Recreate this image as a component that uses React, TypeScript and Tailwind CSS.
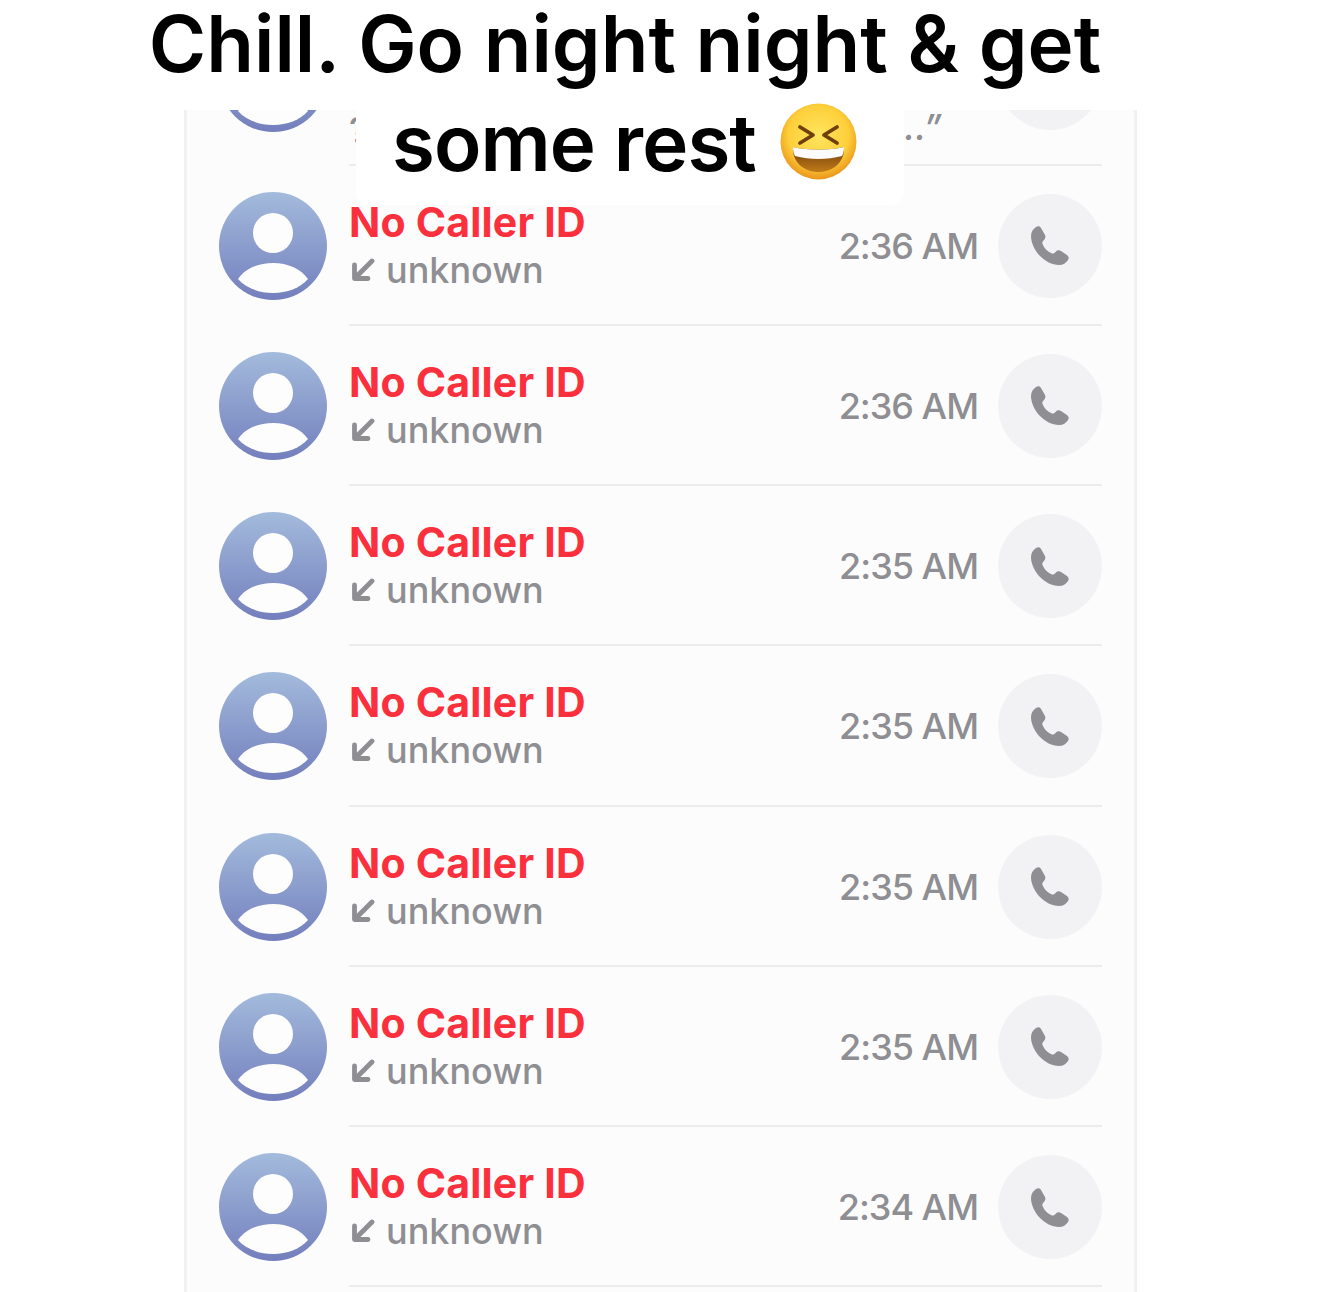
const times = ["2:36 AM", "2:36 AM", "2:35 AM", "2:35 AM", "2:35 AM", "2:35 AM", "2:34 AM"];

function Avatar({ id }: { id: string }) {
  return (
    <svg width="108" height="108" viewBox="0 0 108 108" className="shrink-0">
      <defs>
        <linearGradient id={id} x1="0" y1="0" x2="0" y2="1">
          <stop offset="0" stopColor="#a3bbdc" />
          <stop offset="1" stopColor="#737fbd" />
        </linearGradient>
      </defs>
      <circle cx="54" cy="54" r="54" fill={`url(#${id})`} />
      <circle cx="54" cy="41" r="20" fill="#fdfdfd" />
      <path d="M19 87 C26 77 39 71 54 71 C69 71 82 77 89 87 C81 96 68 101 54 101 C40 101 27 96 19 87 Z" fill="#fdfdfd" />
    </svg>
  );
}

function Phone() {
  return (
    <svg width="39" height="39" viewBox="0 0 39 39" className="mr-[1px]">
      <path
        d="M1 10 C1 6 3 3 6 1 C8 0 10 0 11 2 L15 9 C16 11 15 13 13.5 14.5 C12 16 12 17 13 19 C15 23 17 25 21 27 C23 28 24 27.5 25.5 26 C27 24 29 23.5 31 25 L37 29 C39 30.5 39 32.5 38 34 C36 37 33 39 29 39 C22 39 15 35 10 30 C5 25 1 17 1 10 Z"
        fill="#8e8e93"
      />
    </svg>
  );
}

function Arrow() {
  return (
    <svg width="24" height="24" viewBox="0 0 24 24" className="shrink-0">
      <path d="M21 3 L5 19 M3.5 7 V20.5 H17" fill="none" stroke="#8e8e93" strokeWidth="4.8" strokeLinecap="round" strokeLinejoin="round" />
    </svg>
  );
}

function Emoji() {
  return (
    <svg width="77" height="77" viewBox="0 0 77 77" className="mb-[2px] shrink-0">
      <defs>
        <radialGradient id="emojiFace" cx="0.5" cy="0.42" r="0.58">
          <stop offset="0" stopColor="#ffe55e" />
          <stop offset="0.68" stopColor="#fdcf3a" />
          <stop offset="1" stopColor="#ea951c" />
        </radialGradient>
        <linearGradient id="emojiMouth" x1="0" y1="0" x2="0" y2="1">
          <stop offset="0" stopColor="#6f3d0c" />
          <stop offset="1" stopColor="#c07a18" />
        </linearGradient>
      </defs>
      <circle cx="38.5" cy="38.5" r="38" fill="url(#emojiFace)" />
      <path d="M20 24 L33 32 L20 40" fill="none" stroke="#6f400e" strokeWidth="3.8" strokeLinecap="round" strokeLinejoin="round" />
      <path d="M57 24 L44 32 L57 40" fill="none" stroke="#6f400e" strokeWidth="3.8" strokeLinecap="round" strokeLinejoin="round" />
      <path d="M13 44 C28 47.5 49 47.5 64 44 C65 59 53 69 38.5 69 C24 69 12 59 13 44 Z" fill="url(#emojiMouth)" />
      <path d="M13 44 C28 47.5 49 47.5 64 44 C64 48 63.5 50 62 53 C47 57 30 57 15 53 C13.5 50 13 48 13 44 Z" fill="#fbfbfb" />
    </svg>
  );
}

function Row({ time, index }: { time: string; index: number }) {
  return (
    <div className="flex h-[160.25px] pl-[32px] pr-[32px]">
      <div className="pt-[26px]">
        <Avatar id={`avatar-${index}`} />
      </div>
      <div className="ml-[22px] flex flex-1 items-center border-b-2 border-[#ececee] pt-[2px]">
        <div className="flex-1">
          <div className="text-[41px] font-bold leading-[48px] tracking-[0.2px] text-[#fa303c]">No Caller ID</div>
          <div className="flex items-center gap-[11px] pl-[2px] text-[36px] font-medium leading-[48px] text-[#8e8e93]">
            <Arrow />
            <span>unknown</span>
          </div>
        </div>
        <div className="text-[36px] font-medium leading-[48px] tracking-[-1px] text-[#8e8e93]">{time}</div>
        <div className="ml-[20px] flex h-[104px] w-[104px] items-center justify-center rounded-full bg-[#f2f2f5]">
          <Phone />
        </div>
      </div>
    </div>
  );
}

export default function App() {
  return (
    <div className="relative h-[1292px] w-[1320px] overflow-hidden bg-white pt-[110px] font-['Inter','Liberation_Sans',sans-serif]">
      <div className="ml-[184px] h-[1182px] w-[953px] overflow-hidden border-x-[3px] border-[#f1f1f3] bg-[#fcfcfc]">
        <div className="flex h-[55.6px] items-end pl-[32px] pr-[32px]">
          <div className="pb-[34px]">
            <Avatar id="avatar-top" />
          </div>
          <div className="ml-[22px] flex h-[55.6px] flex-1 items-end justify-between border-b-2 border-[#ececee]">
            <div className="mb-[14px] text-[36px] font-medium leading-[40px] text-[#8e8e93]">?</div>
            <div className="flex items-end">
              <div className="mb-[17px] mr-[56px] text-[36px] font-medium italic leading-[40px] text-[#8e8e93]">...”</div>
              <div className="mb-[34px] h-[104px] w-[104px] shrink-0 rounded-full bg-[#f2f2f5]" />
            </div>
          </div>
        </div>
        {times.map((t, i) => (
          <Row key={i} time={t} index={i} />
        ))}
      </div>

      <div className="absolute left-0 top-0 flex w-[1250px] flex-col items-center text-[78px] font-semibold leading-[100px] text-black">
        <div className="-mt-[6px] whitespace-nowrap">Chill. Go night night &amp; get</div>
        <div className="ml-[10px] flex h-[111px] items-center gap-[24px] whitespace-nowrap rounded-[12px] bg-white pb-[14px] pl-[36px] pr-[47px] tracking-[-0.9px]">
          <span>some rest</span>
          <Emoji />
        </div>
      </div>
    </div>
  );
}
